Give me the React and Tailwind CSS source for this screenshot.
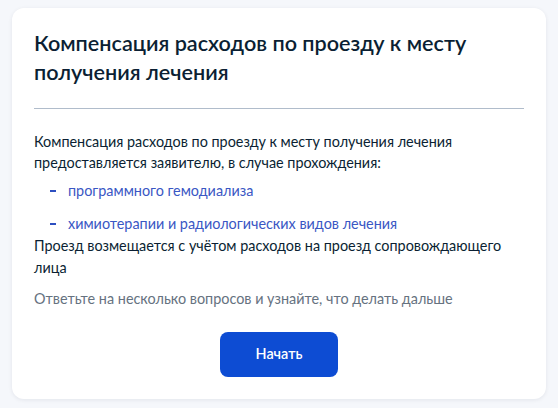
import React from "react";

const items = [
  "программного гемодиализа",
  "химиотерапии и радиологических видов лечения",
];

const App = () => {
  return (
    <div className="min-h-[408px] bg-[#f5f7fb] px-3 pt-2 pb-2 font-['Lato','Noto_Sans',sans-serif]">
      <section className="bg-white rounded-xl shadow-[0_1px_4px_rgba(11,31,51,0.08)] px-[22px] pt-[21px] pb-[22px]">
        <h2 className="text-[21.6px] leading-[28.8px] font-semibold text-[#0b1f33]">
          Компенсация расходов по проезду к месту получения лечения
        </h2>
        <div className="mt-[21px] border-t border-[#b0bccb]" />
        <div className="mt-[22px] text-[14.4px] leading-[21.6px] text-[#0b1f33]">
          <p>
            Компенсация расходов по проезду к месту получения лечения
            предоставляется заявителю, в случае прохождения:
          </p>
          <ul className="mt-[6px] space-y-[12px]">
            {items.map((item) => (
              <li key={item} className="flex items-center text-[#3a57c4]">
                <span className="ml-[16px] mr-[12px] w-[6px] h-[2px] bg-[#2d4fc0]" />
                {item}
              </li>
            ))}
          </ul>
          <p>
            Проезд возмещается с учётом расходов на проезд сопровождающего лица
          </p>
          <p className="mt-[10px] text-[#66727f]">
            Ответьте на несколько вопросов и узнайте, что делать дальше
          </p>
        </div>
        <div className="mt-[22px] flex justify-center">
          <button className="w-[118px] h-[45px] rounded-lg bg-[#0d4cd3] text-white text-[14.4px] font-semibold">
            Начать
          </button>
        </div>
      </section>
    </div>
  );
};

export default App;
